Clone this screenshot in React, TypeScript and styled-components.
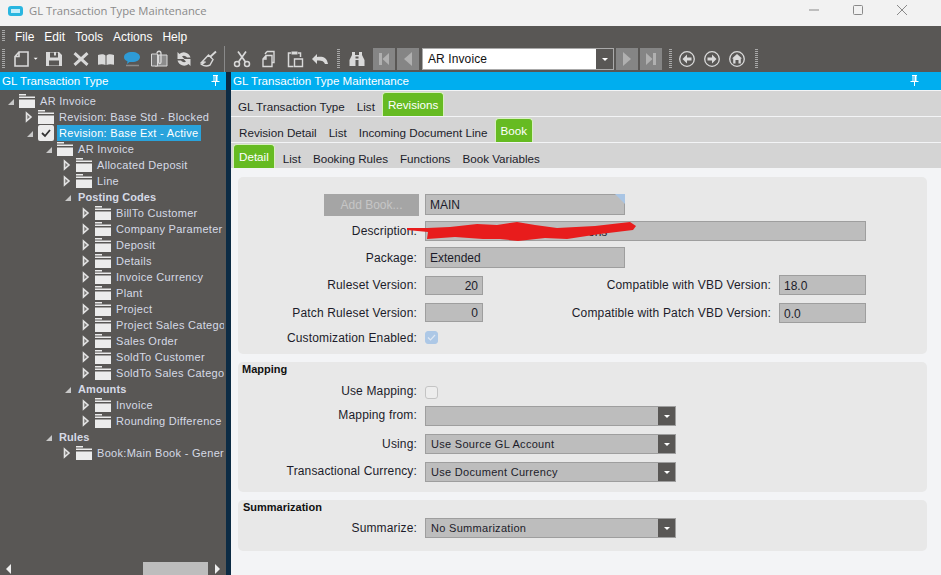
import { ReactNode } from "react"
import styled, { createGlobalStyle } from "styled-components"

const GlobalStyle = createGlobalStyle`
   html, body {
      margin: 0;
      padding: 0;
      width: 941px;
      height: 575px;
      overflow: hidden;
      background: #f3f4f6;
      font-family: "Liberation Sans", Arial, sans-serif;
      font-size: 12px;
   }
   * { box-sizing: border-box; }
`

const ICON = "#d9d9d9"

// toolbar pictures, all on an 18 box
const icons: Record<string, ReactNode> = {
   file: <path d="M6 2h9v14H2V6.5zM6 2v4.5H2" fill="none" stroke={ICON} strokeWidth="1.6" />,
   caret: <path d="M1 7h6l-3 3z" fill="#fff" />,
   save: <path fillRule="evenodd" d="M1 2h13l3 3v11H1zM5 2.5v5h8v-5h-2v3H9v-3zM4 10.5v5h10v-5z" fill={ICON} />,
   close: <path d="M3.5 2 9 7l5.5-5 2 2.2L11.3 9l5.2 4.8-2 2.2L9 11l-5.5 5-2-2.2L6.7 9 1.5 4.2z" fill={ICON} />,
   book: <path d="M1 5c3-1 6-1 7.5.5V15c-2-1-5-1-7.5-.2zM17 5c-3-1-6-1-7.5.5V15c2-1 5-1 7.5-.2z" fill={ICON} />,
   chat: (
      <>
         <path d="M9 2c4.500 0 8 2 8 5s-3.500 5-8 5H6.500L4 14l.5-2.700C2 10.500 1 9 1 7c0-3 3.500-5 8-5z" fill="#2e9bd6" />
         <path d="M3 15.500h13" stroke="#8a8a8a" strokeWidth="1.5" />
      </>
   ),
   docs: (
      <>
         <path d="M5 5h12v11H5z" fill="#8c8c8c" stroke={ICON} strokeWidth="1" />
         <path d="M1.5 4h6v12h-6z" fill="#777" stroke={ICON} strokeWidth="1" />
         <path d="M7 3.5c0-3 4-3 4 0V12c0 2-2.5 2-2.5 0V5" fill="none" stroke={ICON} strokeWidth="1.3" />
      </>
   ),
   refresh: <path d="M15.5 7.5a6.8 6.8 0 0 0-11-3.500L2.5 2v7h7L7 6.5a3.5 3.5 0 0 1 5 1zM2.5 10.5a6.8 6.8 0 0 0 11 3.500l2 2V9h-7l2.5 2.5a3.5 3.5 0 0 1-5-1z" fill={ICON} />,
   broom: (
      <>
         <path d="M10 7 16 1.500" stroke={ICON} strokeWidth="1.8" />
         <path d="M8.5 5 13 9.500 10 15c-3 1.500-6 1-8.500-.5L5.500 12 1.500 12.500z" fill="none" stroke={ICON} strokeWidth="1.4" />
      </>
   ),
   scissors: (
      <>
         <circle cx="4" cy="14" r="2.5" fill="none" stroke={ICON} strokeWidth="1.5" />
         <circle cx="14" cy="14" r="2.5" fill="none" stroke={ICON} strokeWidth="1.5" />
         <path d="M5.5 12 13 1.500M12.500 12 5 1.500" stroke={ICON} strokeWidth="1.7" />
      </>
   ),
   copy: (
      <path d="M7 1.500h7v11h-2M6 5.500h6v11H3V9zM6 5.500V9H3M7 1.500 5 4" fill="none" stroke={ICON} strokeWidth="1.4" />
   ),
   paste: (
      <>
         <path d="M5 3H2.500v13.500h5M12 3h2.500v4" fill="none" stroke={ICON} strokeWidth="1.5" />
         <path d="M5.5 1.500h6v3h-6z" fill={ICON} />
         <path d="M8.5 9h8v7.500h-8z" fill="none" stroke={ICON} strokeWidth="1.4" />
      </>
   ),
   undo: <path d="M1 9l5-5v3c5-1 10 0 11 7h-3c-1-3-4-4-8-3.500V14z" fill={ICON} />,
   binoculars: (
      <path fillRule="evenodd" d="M4 2h3v3h4V2h3v3l2.500 5v6h-6v-6H7.500v6h-6v-6L4 5zM7.500 6.500v2h3v-2z" fill={ICON} />
   ),
   back: (
      <>
         <circle cx="8" cy="9" r="7.3" fill="none" stroke={ICON} strokeWidth="1.3" />
         <path d="M8 4.500 3.500 9 8 13.500v-3h4.500v-3H8z" fill={ICON} />
      </>
   ),
   forward: (
      <>
         <circle cx="8" cy="9" r="7.3" fill="none" stroke={ICON} strokeWidth="1.3" />
         <path d="M8 4.500 12.500 9 8 13.500v-3H3.500v-3H8z" fill={ICON} />
      </>
   ),
   home: (
      <>
         <circle cx="8" cy="9" r="7.3" fill="none" stroke={ICON} strokeWidth="1.3" />
         <path d="M8 4 13 8.500h-1.200V13.500H9.500V10h-3v3.500H4.200V8.500H3z" fill={ICON} />
      </>
   ),
}

const leftTools: [string, number][] = [
   ["file", 20], ["caret", 12], ["save", 27], ["close", 25], ["book", 26], ["chat", 27],
   ["docs", 25], ["refresh", 25], ["broom", 24],
]
const editTools: [string, number][] = [["scissors", 27], ["copy", 26], ["paste", 25], ["undo", 26]]
const navTools: [string, number][] = [["back", 25], ["forward", 25], ["home", 26]]

const treeRows = [
   { level: 0, label: "AR Invoice", open: true },
   { level: 1, label: "Revision: Base Std - Blocked" },
   { level: 1, label: "Revision: Base Ext - Active", open: true, checked: true, selected: true },
   { level: 2, label: "AR Invoice", open: true },
   { level: 3, label: "Allocated Deposit" },
   { level: 3, label: "Line" },
   { level: 3, label: "Posting Codes", open: true, group: true },
   { level: 4, label: "BillTo Customer" },
   { level: 4, label: "Company Parameter" },
   { level: 4, label: "Deposit" },
   { level: 4, label: "Details" },
   { level: 4, label: "Invoice Currency" },
   { level: 4, label: "Plant" },
   { level: 4, label: "Project" },
   { level: 4, label: "Project Sales Category" },
   { level: 4, label: "Sales Order" },
   { level: 4, label: "SoldTo Customer" },
   { level: 4, label: "SoldTo Sales Category" },
   { level: 3, label: "Amounts", open: true, group: true },
   { level: 4, label: "Invoice" },
   { level: 4, label: "Rounding Difference" },
   { level: 2, label: "Rules", open: true, group: true },
   { level: 3, label: "Book:Main Book - General" },
]

function ToolIcon({ name }: { name: string }) {
   return (
      <svg width="18" height="18" viewBox="0 0 18 18">
         {icons[name]}
      </svg>
   )
}

function Tools({ items }: { items: [string, number][] }) {
   return (
      <>
         {items.map(([name, width]) => (
            <ToolSlot key={name} $width={width}>
               <ToolIcon name={name} />
            </ToolSlot>
         ))}
      </>
   )
}

function Folder() {
   return (
      <FolderIcon width="16" height="14" viewBox="0 0 16 14">
         <path d="M0 0h7v1.500H0zM0 2.500h16V4H0zM0 5.500h16V14H0z" fill="#ececec" />
      </FolderIcon>
   )
}

function TreeRow({ row }: { row: (typeof treeRows)[number] }) {
   return (
      <TreeLine $level={row.level}>
         <Arrow width="13" height="12" viewBox="0 0 13 12">
            {row.open ? (
               <path d="M2 10h6V4z" fill="#c8c8c8" />
            ) : (
               <path d="M1.500 2 6 6l-4.500 4z" fill="#7a7876" stroke="#e4e4e4" strokeWidth="1.600" />
            )}
         </Arrow>
         {row.checked ? (
            <CheckFolder width="16" height="16" viewBox="0 0 16 16">
               <path d="M2 0h12a2 2 0 0 1 2 2v12a2 2 0 0 1-2 2H2a2 2 0 0 1-2-2V2a2 2 0 0 1 2-2z" fill="#ececec" />
               <path d="M4 8l3 3 5-6" fill="none" stroke="#333" strokeWidth="1.800" />
            </CheckFolder>
         ) : (
            !row.group && <Folder />
         )}
         <TreeLabel $selected={row.selected} $group={row.group}>{row.label}</TreeLabel>
      </TreeLine>
   )
}

function Select({ value }: { value?: string }) {
   return (
      <SelectBox>
         <SelectValue>{value}</SelectValue>
         <SelectArrow />
      </SelectBox>
   )
}

function PinIcon() {
   return (
      <svg width="9" height="11" viewBox="0 0 9 11">
         <path d="M2 0h5v1H6.500v5H8.500v1h-3.500v4H4V7H.5V6h2V1H2zM3.500 1v5h1V1z" fill="#fff" />
      </svg>
   )
}

export default function App() {
   return (
      <Window>
         <GlobalStyle />
         <TitleBar>
            <AppLogo />
            <TitleText>GL Transaction Type Maintenance</TitleText>
            <WindowControls>
               <WindowButton>
                  <svg width="12" height="12" viewBox="0 0 12 12"><path d="M1 6h10" stroke="#8a8a8a" /></svg>
               </WindowButton>
               <WindowButton>
                  <svg width="12" height="12" viewBox="0 0 12 12"><rect x="1.500" y="1.500" width="9" height="9" rx="1" fill="none" stroke="#8a8a8a" /></svg>
               </WindowButton>
               <WindowButton>
                  <svg width="12" height="12" viewBox="0 0 12 12"><path d="M1 1l10 10M11 1 1 11" stroke="#8a8a8a" /></svg>
               </WindowButton>
            </WindowControls>
         </TitleBar>

         <MenuBar>
            <Grip $height={12} />
            <MenuItems>
               <span>File</span>
               <span>Edit</span>
               <span>Tools</span>
               <span>Actions</span>
               <span>Help</span>
            </MenuItems>
         </MenuBar>

         <ToolBar>
            <Grip $height={20} />
            <ToolGroup>
               <Tools items={leftTools} />
            </ToolGroup>
            <ToolDivider />
            <Tools items={editTools} />
            <Grip $height={20} />
            <ToolSlot $width={8} />
            <Tools items={[["binoculars", 25]]} />
            <NavButton>
               <svg width="14" height="14" viewBox="0 0 14 14"><path d="M2 1h3v12H2zM12 1v12L5.500 7z" fill="#b0b0b0" /></svg>
            </NavButton>
            <NavButton>
               <svg width="14" height="14" viewBox="0 0 14 14"><path d="M11 0v14L3 7z" fill="#b0b0b0" /></svg>
            </NavButton>
            <RecordCombo>
               <RecordValue>AR Invoice</RecordValue>
               <SelectArrow />
            </RecordCombo>
            <NavButton>
               <svg width="14" height="14" viewBox="0 0 14 14"><path d="M3 0v14l8-7z" fill="#b0b0b0" /></svg>
            </NavButton>
            <NavButton>
               <svg width="14" height="14" viewBox="0 0 14 14"><path d="M2 1v12l6.500-6zM9 1h3v12H9z" fill="#b0b0b0" /></svg>
            </NavButton>
            <NavSpacer />
            <Grip $height={20} />
            <ToolSlot $width={7} />
            <Tools items={navTools} />
            <Grip $height={20} />
         </ToolBar>

         <Workspace>
            <SidePanel>
               <PanelHeader $pinRight={6}>
                  <span>GL Transaction Type</span>
                  <PinIcon />
               </PanelHeader>
               <Tree>
                  {treeRows.map((row, i) => (
                     <TreeRow key={i} row={row} />
                  ))}
               </Tree>
               <ScrollBar>
                  <svg width="6" height="10" viewBox="0 0 6 10"><path d="M5 0v10L0 5z" fill="#eee" /></svg>
                  <ScrollTrack><ScrollThumb /></ScrollTrack>
                  <svg width="6" height="10" viewBox="0 0 6 10"><path d="M1 0v10l5-5z" fill="#eee" /></svg>
               </ScrollBar>
            </SidePanel>

            <Splitter />

            <MainPanel>
               <PanelHeader $pinRight={22}>
                  <span>GL Transaction Type Maintenance</span>
                  <PinIcon />
               </PanelHeader>

               <TabStrip $indent={7}>
                  <Tab>GL Transaction Type</Tab>
                  <Tab>List</Tab>
                  <Tab $active>Revisions</Tab>
               </TabStrip>
               <TabStrip $indent={8}>
                  <Tab>Revision Detail</Tab>
                  <Tab>List</Tab>
                  <Tab>Incoming Document Line</Tab>
                  <Tab $active>Book</Tab>
               </TabStrip>
               <TabStrip $indent={7}>
                  <Tab $active>Detail</Tab>
                  <Tab>List</Tab>
                  <Tab>Booking Rules</Tab>
                  <Tab>Functions</Tab>
                  <Tab>Book Variables</Tab>
               </TabStrip>

               <Content>
                  <Section $rows="27px 26px 27px 28px 27px 23px" $top={14} $bottom={5}>
                     <FormRow>
                        <LabelCell><AddBookButton>Add Book...</AddBookButton></LabelCell>
                        <Field $width={200} $height={21} $marked>MAIN</Field>
                     </FormRow>
                     <FormRow>
                        <LabelCell>Description:</LabelCell>
                        <Field $width={441} $height={20}>
                           <HiddenTail>ons</HiddenTail>
                           <Scribble width="240" height="32" viewBox="0 0 240 32">
                              <path d="M2 15 22 15 45 14 72 11 92 12 112 9 130 12 152 15 190 13 225 9 231 13 228 17 195 21 162 26 140 25 113 28 95 26 78 26 50 24 22 26 23 19 2 17z" fill="#e81c1c" />
                           </Scribble>
                        </Field>
                     </FormRow>
                     <FormRow>
                        <LabelCell>Package:</LabelCell>
                        <Field $width={200} $height={21}>Extended</Field>
                     </FormRow>
                     <FormRow>
                        <LabelCell>Ruleset Version:</LabelCell>
                        <Field $width={58} $height={19} $number>20</Field>
                        <SideLabel>Compatible with VBD Version:</SideLabel>
                        <Field $width={87} $height={20}>18.0</Field>
                     </FormRow>
                     <FormRow>
                        <LabelCell>Patch Ruleset Version:</LabelCell>
                        <Field $width={58} $height={19} $number>0</Field>
                        <SideLabel>Compatible with Patch VBD Version:</SideLabel>
                        <Field $width={87} $height={20}>0.0</Field>
                     </FormRow>
                     <FormRow>
                        <LabelCell>Customization Enabled:</LabelCell>
                        <CheckBox $checked>
                           <svg width="9" height="9" viewBox="0 0 9 9"><path d="M1 4.500 3.500 7 8 2" fill="none" stroke="#dfe8f3" strokeWidth="1.200" /></svg>
                        </CheckBox>
                     </FormRow>
                  </Section>

                  <Section $rows="20px 20px 28px 28px 28px" $top={0} $bottom={6}>
                     <SectionTitle>Mapping</SectionTitle>
                     <FormRow>
                        <LabelCell $raised>Use Mapping:</LabelCell>
                        <CheckBox />
                     </FormRow>
                     <FormRow>
                        <LabelCell $raised>Mapping from:</LabelCell>
                        <Select />
                     </FormRow>
                     <FormRow>
                        <LabelCell>Using:</LabelCell>
                        <Select value="Use Source GL Account" />
                     </FormRow>
                     <FormRow>
                        <LabelCell $raised>Transactional Currency:</LabelCell>
                        <Select value="Use Document Currency" />
                     </FormRow>
                  </Section>

                  <Section $rows="14px 28px" $top={0} $bottom={9}>
                     <SectionTitle $indent={5}>Summarization</SectionTitle>
                     <FormRow>
                        <LabelCell>Summarize:</LabelCell>
                        <Select value="No Summarization" />
                     </FormRow>
                  </Section>
               </Content>
            </MainPanel>
         </Workspace>
      </Window>
   )
}

const Window = styled.div`
   width: 941px;
   height: 575px;
   display: flex;
   flex-direction: column;
   overflow: hidden;
`

const TitleBar = styled.div`
   height: 26px;
   flex: none;
   display: flex;
   align-items: center;
   padding: 0 0 5px 8px;
   background: #f2f2f2;
`

const AppLogo = styled.div`
   width: 15px;
   height: 10px;
   margin-right: 6px;
   border: 3px solid #29b6e0;
   border-radius: 3px;
   background: #c4eefa;
`

const TitleText = styled.div`
   color: #8a8a8a;
   font-size: 11.25px;
   font-family: "Open Sans", sans-serif;
`

const WindowControls = styled.div`
   margin-left: auto;
   display: flex;
   padding-right: 33px;
   gap: 32px;
   margin-top: -2px;
`

const WindowButton = styled.div`
   width: 12px;
   height: 12px;
   display: flex;
`

const MenuBar = styled.div`
   height: 20px;
   flex: none;
   display: flex;
   align-items: center;
   padding-left: 2px;
   background: #595755;
`

const MenuItems = styled.div`
   display: flex;
   gap: 10px;
   margin-left: 10px;
   margin-top: 2px;
   color: #fff;
`

const Grip = styled.div<{ $height: number }>`
   width: 3px;
   flex: none;
   height: ${(p) => p.$height}px;
   background: repeating-linear-gradient(#a8a8a8 0 1px, transparent 1px 2px);
`

const ToolBar = styled.div`
   height: 26px;
   flex: none;
   display: flex;
   align-items: center;
   padding-left: 2px;
   background: #595755;
`

const ToolGroup = styled.div`
   display: flex;
   align-items: center;
   margin-left: 8px;
`

const ToolSlot = styled.div<{ $width: number }>`
   width: ${(p) => p.$width}px;
   flex: none;
   display: flex;
   align-items: center;
`

const ToolDivider = styled.div`
   width: 1px;
   height: 26px;
   flex: none;
   margin-right: 8px;
   background: #8a8a8a;
`

const NavButton = styled.div`
   width: 22px;
   height: 22px;
   flex: none;
   margin-right: 2px;
   display: flex;
   align-items: center;
   justify-content: center;
   background: #858585;
`

const NavSpacer = styled.div`
   width: 5px;
   flex: none;
`

const RecordCombo = styled.div`
   width: 192px;
   height: 22px;
   flex: none;
   margin: 0 2px 0 1px;
   display: flex;
   border: 1px solid #aaa;
   background: #fff;
`

const RecordValue = styled.div`
   flex: 1;
   padding-left: 5px;
   line-height: 20px;
   letter-spacing: 0.1px;
   color: #111;
`

const Workspace = styled.div`
   flex: 1;
   min-height: 0;
   display: flex;
`

const SidePanel = styled.div`
   width: 226px;
   flex: none;
   display: flex;
   flex-direction: column;
   background: #595755;
`

const Splitter = styled.div`
   width: 5px;
   flex: none;
   background: #0c2b44;
`

const PanelHeader = styled.div<{ $pinRight: number }>`
   height: 18px;
   flex: none;
   display: flex;
   align-items: center;
   justify-content: space-between;
   padding: 0 ${(p) => p.$pinRight}px 1px 2px;
   background: #00aeef;
   color: #fff;
   font-size: 11.6px;
`

const Tree = styled.div`
   flex: 1;
   min-height: 0;
   overflow: hidden;
   margin-right: 2px;
   padding-top: 3px;
`

const TreeLine = styled.div<{ $level: number }>`
   height: 16px;
   display: flex;
   align-items: center;
   white-space: nowrap;
   padding-left: ${(p) => 6 + p.$level * 19}px;
`

const Arrow = styled.svg`
   flex: none;
`

const FolderIcon = styled.svg`
   flex: none;
`

const CheckFolder = styled.svg`
   flex: none;
`

const TreeLabel = styled.span<{ $selected?: boolean; $group?: boolean }>`
   margin-left: ${(p) => (p.$group ? 0 : 3)}px;
   padding: 0 2px;
   font-size: 11px;
   letter-spacing: ${(p) => (p.$group ? 0.1 : 0.3)}px;
   line-height: 16px;
   color: ${(p) => (p.$selected ? "#fff" : "#d6dae6")};
   background: ${(p) => (p.$selected ? "#29a3dc" : "transparent")};
   font-weight: ${(p) => (p.$group ? "bold" : "normal")};
`

const ScrollBar = styled.div`
   height: 13px;
   flex: none;
   display: flex;
   align-items: center;
   padding: 0 6px;
   gap: 3px;
`

const ScrollTrack = styled.div`
   flex: 1;
   height: 13px;
   padding-left: 128px;
`

const ScrollThumb = styled.div`
   width: 65px;
   height: 13px;
   background: #bdbdbd;
`

const MainPanel = styled.div`
   flex: 1;
   min-width: 0;
   display: flex;
   flex-direction: column;
   background: #f3f4f6;
`

const TabStrip = styled.div<{ $indent: number }>`
   height: 25px;
   flex: none;
   display: flex;
   align-items: flex-end;
   gap: 12px;
   margin-top: 1px;
   padding-left: ${(p) => p.$indent}px;
   background: #d4d4d4;
`

const Tab = styled.div<{ $active?: boolean }>`
   height: 24px;
   display: flex;
   align-items: center;
   white-space: nowrap;
   padding-top: 4px;
   font-size: 11.65px;
   color: ${(p) => (p.$active ? "#fff" : "#1c1c2a")};
   ${(p) => p.$active && `
      margin-left: -5px;
      margin-right: -4px;
      padding: 0 5px 1px;
      background: #66bb22;
      border: 1px solid #d8f0c0;
      border-bottom: none;
      border-radius: 4px 4px 0 0;
   `}
`

const Content = styled.div`
   flex: 1;
   display: flex;
   flex-direction: column;
   gap: 8px;
   padding: 9px 14px 0 7px;
`

const Section = styled.section<{ $rows: string; $top: number; $bottom: number }>`
   display: grid;
   grid-template-rows: ${(p) => p.$rows};
   padding-top: ${(p) => p.$top}px;
   padding-bottom: ${(p) => p.$bottom}px;
   border-radius: 5px;
   background: #e8e8e8;
`

const SectionTitle = styled.div<{ $indent?: number }>`
   padding-left: ${(p) => p.$indent ?? 4}px;
   font-weight: bold;
   font-size: 11px;
   line-height: 14px;
   color: #111;
`

const FormRow = styled.div`
   display: flex;
   align-items: center;
   width: 628px;
`

const LabelCell = styled.div<{ $raised?: boolean }>`
   width: 179px;
   flex: none;
   margin-right: 8px;
   margin-bottom: ${(p) => (p.$raised ? 3 : 0)}px;
   display: flex;
   justify-content: flex-end;
   letter-spacing: 0.15px;
   color: #1c1c2a;
   white-space: nowrap;
`

const SideLabel = styled.div`
   margin-left: auto;
   margin-right: 8px;
   letter-spacing: 0.15px;
   color: #1c1c2a;
   white-space: nowrap;
`

const AddBookButton = styled.div`
   width: 95px;
   height: 22px;
   margin-right: -2px;
   line-height: 22px;
   text-align: center;
   letter-spacing: 0;
   background: #a5a5a5;
   color: #c6c6c6;
`

const Field = styled.div<{ $width: number; $height: number; $number?: boolean; $marked?: boolean }>`
   position: relative;
   width: ${(p) => p.$width}px;
   height: ${(p) => p.$height}px;
   flex: none;
   padding: 0 4px;
   line-height: ${(p) => p.$height}px;
   text-align: ${(p) => (p.$number ? "right" : "left")};
   border: 1px solid #9e9e9e;
   background: #bdbdbd;
   color: #1c1c2a;
   ${(p) => p.$marked && `
      &::after {
         content: "";
         position: absolute;
         top: -1px;
         right: -1px;
         border-style: solid;
         border-width: 0 10px 10px 0;
         border-color: transparent #a9c5e4 transparent transparent;
      }
   `}
`

const HiddenTail = styled.span`
   display: block;
   padding-left: 158px;
`

const Scribble = styled.svg`
   position: absolute;
   left: -21px;
   top: -9px;
`

const CheckBox = styled.div<{ $checked?: boolean }>`
   width: 13px;
   height: 13px;
   display: flex;
   align-items: center;
   justify-content: center;
   border-radius: 3px;
   border: 1px solid ${(p) => (p.$checked ? "#adc8e6" : "#c4c4c4")};
   background: ${(p) => (p.$checked ? "#adc8e6" : "#ededed")};
`

const SelectBox = styled.div`
   width: 251px;
   height: 20px;
   display: flex;
   border: 1px solid #9e9e9e;
   background: #bdbdbd;
`

const SelectValue = styled.div`
   flex: 1;
   padding-left: 5px;
   font-size: 11px;
   letter-spacing: 0.3px;
   line-height: 18px;
   color: #1c1c2a;
`

const SelectArrow = styled.div`
   width: 17px;
   flex: none;
   display: flex;
   align-items: center;
   justify-content: center;
   background: #595755;
   &::before {
      content: "";
      border-style: solid;
      border-width: 3px 3px 0;
      border-color: #fff transparent transparent;
   }
`
